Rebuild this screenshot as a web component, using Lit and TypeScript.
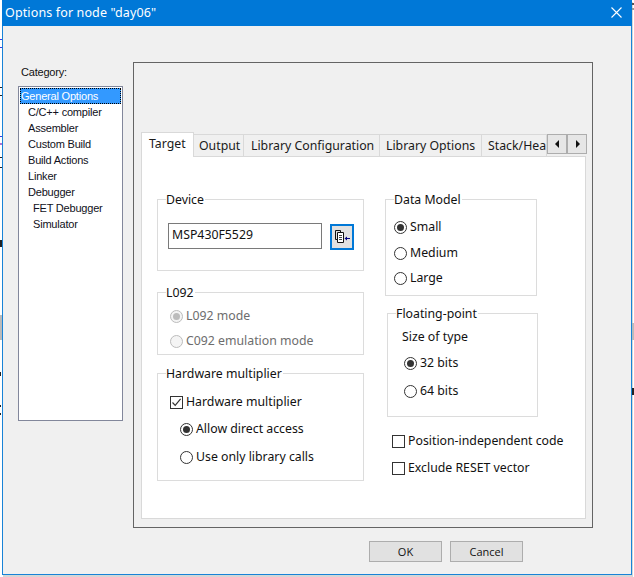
import { LitElement, html, css } from "lit";
import { customElement } from "lit/decorators.js";

const FRAGMENTS: [number, number, number, number, string][] = [
  [0, 39, 2, 1, "#3a3ae0"], [0, 47, 2, 1, "#3a3ae0"], [0, 87, 2, 1, "#222"], [0, 95, 2, 1, "#222"],
  [0, 136, 2, 1, "#3a3ae0"], [0, 143, 2, 2, "#b070d0"], [0, 157, 2, 1, "#222"], [0, 167, 2, 1, "#222"],
  [0, 240, 2, 7, "#222"], [0, 315, 2, 25, "#bbbbbb"], [0, 372, 1, 4, "#222"], [0, 405, 1, 2, "#222"], [0, 413, 1, 2, "#222"],
  [632, 3, 2, 2, "#555"], [632, 8, 2, 2, "#999"], [632, 323, 2, 17, "#bbbbbb"], [632, 388, 2, 7, "#222"],
];

@customElement("app-root")
export class AppRoot extends LitElement {
  static styles = css`
    :host { display: block; width: 634px; height: 577px; background: #fff; position: relative; overflow: hidden;
      font-family: "Noto Sans", "Liberation Sans", sans-serif; font-size: 12px; color: #111; line-height: 16px; }
    .window { box-sizing: border-box; margin-left: 2px; width: 630px; height: 575px; border: 1px solid #1883d7; border-top: 0; background: #f0f0f0; display: flex; flex-direction: column; box-shadow: 1px 2px 0 #d6d6d6; }
    .title { flex: none; height: 26px; background: #0078d7; color: #fff; font-size: 12.5px; display: flex; align-items: center; justify-content: space-between; padding: 0 10px 1px 3px; margin: 0 -1px; box-sizing: border-box; }
    .title span { letter-spacing: 0.13px; }
    .body { flex: none; display: flex; padding: 36px 38px 0 15px; }
    .left { width: 105px; flex: none; margin-right: 10px; }
    .cat { height: 24px; padding-left: 3px; font: 11px/20px "Liberation Sans", sans-serif; letter-spacing: -0.2px; }
    .list { box-sizing: border-box; height: 335px; border: 1px solid #82879b; background: #fff; padding: 1px; font: 11px/16px "Liberation Sans", sans-serif; letter-spacing: -0.2px; color: #101020; }
    .li { height: 16px; padding-left: 8px; white-space: nowrap; }
    .li.sub { padding-left: 13px; }
    .li.sel { background: #3399ff; color: #fff; outline: 1px dotted #000; outline-offset: -1px; padding-left: 1px; }
    .panel { box-sizing: border-box; width: 461px; height: 466px; border: 1px solid #646464; padding: 69px 6px 8px 7px; display: flex; flex-direction: column; }
    .tabs { flex: none; height: 24px; display: flex; position: relative; }
    .tab { box-sizing: border-box; height: 22px; margin-top: 2px; padding-left: 5px; background: #f0f0f0; border: 1px solid #d9d9d9; border-left: 0; border-bottom: 0; line-height: 21px; font-size: 12.3px; white-space: nowrap; overflow: hidden; color: #1a1a1a; }
    .tab.on { height: 25px; margin-top: 0; background: #fff; border-left: 1px solid #d9d9d9; width: 53px; padding-left: 7px; position: relative; z-index: 1; line-height: 21px; }
    .t-output { width: 50px; }
    .t-conf { width: 136px; padding-left: 7px; }
    .t-opts { width: 102px; padding-left: 6px; }
    .t-stack { width: 65px; padding-left: 6px; }
    .scroll { position: absolute; left: 406px; top: 2px; display: flex; z-index: 2; }
    .scroll button { box-sizing: border-box; width: 20px; height: 20px; padding: 0; background: #e6e6e6; border: 1px solid #adadad; display: flex; align-items: center; justify-content: center; }
    .page { flex: 1; box-sizing: border-box; background: #fff; border: 1px solid #d9d9d9; display: flex; padding: 42px 0 0 15px; }
    .col1 { width: 207px; flex: none; margin-right: 21px; display: flex; flex-direction: column; }
    .col2 { flex: none; width: 190px; display: flex; flex-direction: column; }
    .group { box-sizing: border-box; border: 1px solid #dcdcdc; position: relative; }
    .legend { position: absolute; top: -8px; left: 8px; background: #fff; padding-right: 1px; line-height: 15px; height: 15px; font-size: 12.3px; white-space: nowrap; }
    .device { height: 72px; margin-bottom: 21px; display: flex; align-items: flex-start; padding: 23px 0 0 10px; }
    .input { box-sizing: border-box; width: 154px; height: 26px; border: 1px solid #7a7a7a; background: #fff; padding-left: 3px; line-height: 22px; font-size: 12.3px; }
    .browse { box-sizing: border-box; width: 24px; height: 26px; margin: 1px 0 0 8px; border: 2px solid #0078d7; background: #e1e1e1; display: flex; align-items: center; justify-content: center; padding: 0; }
    .l092 { height: 63px; margin-bottom: 18px; padding-top: 15px; }
    .hw { height: 108px; padding-top: 20px; }
    .row { display: flex; align-items: center; height: 16px; white-space: nowrap; font-size: 12.3px; gap: 3px; }
    .box { box-sizing: border-box; width: 13px; height: 13px; flex: none; background: #fff; border: 1px solid #333; display: flex; align-items: center; justify-content: center; }
    .dot { box-sizing: border-box; width: 13px; height: 13px; flex: none; border-radius: 50%; background: #fff; border: 1px solid #333; display: flex; align-items: center; justify-content: center; }
    .dot i { display: block; width: 7px; height: 7px; border-radius: 50%; background: #333; }
    .dis { color: #6d6d6d; }
    .dis .dot { border-color: #bcbcbc; background: #f4f4f4; }
    .dis .dot i { background: #bcbcbc; }
    .m12 { margin-left: 12px; }
    .m16 { margin-left: 16px; }
    .m22 { margin-left: 22px; }
    .g9 { height: 9px; } .g10 { height: 10px; } .g11 { height: 11px; } .g12 { height: 12px; }
    .dm { width: 152px; height: 97px; padding-top: 19px; margin-bottom: 17px; }
    .dm .row { margin-left: 8px; }
    .fp { width: 151px; height: 104px; margin-left: 2px; padding-top: 15px; margin-bottom: 16px; }
    .size { margin-left: 14px; height: 16px; line-height: 16px; font-size: 12.3px; }
    .opts { margin-left: 7px; display: flex; flex-direction: column; gap: 11px; }
    .footer { flex: none; display: flex; justify-content: flex-end; gap: 8px; height: 46px; padding: 13px 108px 0 0; box-sizing: border-box; }
    .btn { box-sizing: border-box; width: 73px; height: 21px; background: #e1e1e1; border: 1px solid #adadad; font: 11px/17px "Open Sans", sans-serif; color: #111; padding: 0; }
    .main { flex: 1; display: flex; flex-direction: column; }
    .frag { position: absolute; }
  `;

  private radio(label: string, on = false, cls = "") {
    return html`<div class="row ${cls}"><span class="dot">${on ? html`<i></i>` : ""}</span>${label}</div>`;
  }
  private check(label: string, on = false, cls = "") {
    return html`<div class="row ${cls}"><span class="box">${on
      ? html`<svg width="11" height="11" viewBox="0 0 11 11"><path d="M1.5 5.5 L4.2 8.3 L9.6 1.8" fill="none" stroke="#333" stroke-width="1.2"/></svg>`
      : ""}</span>${label}</div>`;
  }

  render() {
    const items = ["C/C++ compiler", "Assembler", "Custom Build", "Build Actions", "Linker", "Debugger"];
    return html`
      ${FRAGMENTS.map(([x, y, w, h, c]) => html`<div class="frag" style="left:${x}px;top:${y}px;width:${w}px;height:${h}px;background:${c}"></div>`)}
      <div class="window">
        <div class="title"><span>Options for node "day06"</span>
          <svg width="11" height="11" viewBox="0 0 11 11"><path d="M.5 .5 L10.5 10.5 M10.5 .5 L.5 10.5" stroke="#fff" stroke-width="1.1"/></svg>
        </div>
        <div class="main">
          <div class="body">
            <div class="left">
              <div class="cat">Category:</div>
              <div class="list">
                <div class="li sel">General Options</div>
                ${items.map((t) => html`<div class="li">${t}</div>`)}
                <div class="li sub">FET Debugger</div>
                <div class="li sub">Simulator</div>
              </div>
            </div>
            <div class="panel">
              <div class="tabs">
                <div class="tab on">Target</div>
                <div class="tab t-output">Output</div>
                <div class="tab t-conf">Library Configuration</div>
                <div class="tab t-opts">Library Options</div>
                <div class="tab t-stack">Stack/Heap</div>
                <div class="scroll">
                  <button><svg width="5" height="8" viewBox="0 0 5 8"><path d="M4 0 V8 L0 4 Z" fill="#111"/></svg></button>
                  <button><svg width="5" height="8" viewBox="0 0 5 8"><path d="M1 0 V8 L5 4 Z" fill="#111"/></svg></button>
                </div>
              </div>
              <div class="page">
                <div class="col1">
                  <div class="group device">
                    <div class="legend">Device</div>
                    <div class="input">MSP430F5529</div>
                    <button class="browse">
                      <svg width="16" height="16" viewBox="0 0 16 16">
                        <path d="M1.5 1.5 H6.5 V3.5 M1.5 1.5 V10.5 H3.5" fill="none" stroke="#111"/>
                        <path d="M3.5 3.5 H9.5 V13.5 H3.5 Z" fill="#fff" stroke="#111"/>
                        <path d="M5 6.5 H8 M5 8.5 H8 M5 10.5 H8" stroke="#444"/>
                        <path d="M12 9.5 H16" stroke="#000080"/>
                        <path d="M10.5 9.5 L13 7.5 V11.5 Z" fill="#000080"/>
                      </svg>
                    </button>
                  </div>
                  <div class="group l092">
                    <div class="legend">L092</div>
                    ${this.radio("L092 mode", true, "m12 dis")}
                    <div class="g9"></div>
                    ${this.radio("C092 emulation mode", false, "m12 dis")}
                  </div>
                  <div class="group hw">
                    <div class="legend">Hardware multiplier</div>
                    ${this.check("Hardware multiplier", true, "m12")}
                    <div class="g11"></div>
                    ${this.radio("Allow direct access", true, "m22")}
                    <div class="g12"></div>
                    ${this.radio("Use only library calls", false, "m22")}
                  </div>
                </div>
                <div class="col2">
                  <div class="group dm">
                    <div class="legend">Data Model</div>
                    ${this.radio("Small", true)}
                    <div class="g10"></div>
                    ${this.radio("Medium")}
                    <div class="g9"></div>
                    ${this.radio("Large")}
                  </div>
                  <div class="group fp">
                    <div class="legend">Floating-point</div>
                    <div class="size">Size of type</div>
                    <div class="g10"></div>
                    ${this.radio("32 bits", true, "m16")}
                    <div class="g12"></div>
                    ${this.radio("64 bits", false, "m16")}
                  </div>
                  <div class="opts">
                    ${this.check("Position-independent code")}
                    ${this.check("Exclude RESET vector")}
                  </div>
                </div>
              </div>
            </div>
          </div>
          <div class="footer">
            <button class="btn">OK</button>
            <button class="btn">Cancel</button>
          </div>
        </div>
      </div>
    `;
  }
}
